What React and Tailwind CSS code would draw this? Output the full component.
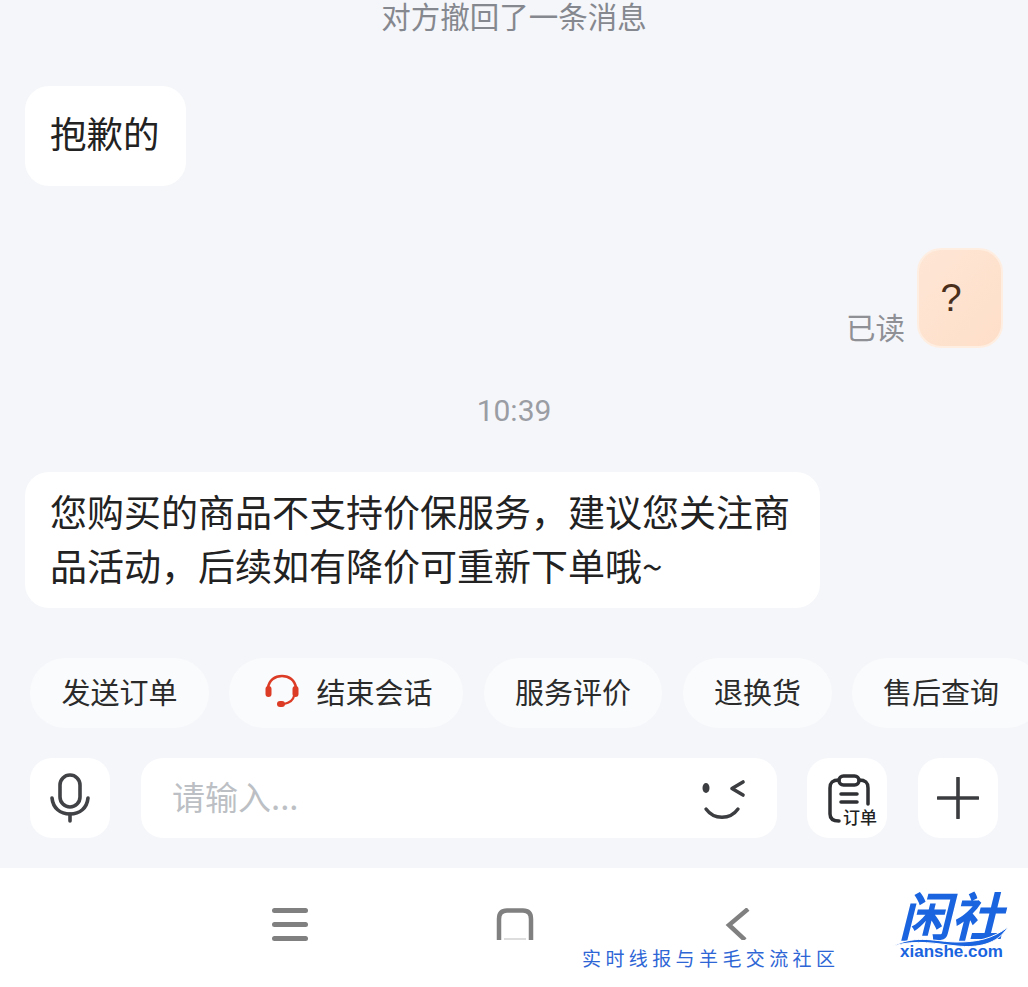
const Chip = ({ children, className = "" }) => (
  <div className={"h-[70px] shrink-0 rounded-[35px] bg-[#fafbfc] flex items-center justify-center pb-[4px] text-[29px] leading-none text-[#2b2b2b] " + className}>{children}</div>
);
export default function App() {
  return (
    <div className="relative w-[1028px] h-[987px] overflow-hidden bg-[#f5f6fa] flex flex-col font-['Noto_Sans_CJK_SC',sans-serif]">
      <div className="h-[34px] flex items-center justify-center pb-[4px] text-[29.5px] leading-[30px] text-[#85888e]">对方撤回了一条消息</div>

      <div className="mt-[52px] ml-[25px] w-[161px] h-[100px] rounded-[24px] bg-white flex items-center pl-[25px] pb-[5px] text-[36.5px] leading-none text-[#222]">抱歉的</div>

      <div className="mt-[62px] mr-[25px] flex justify-end items-end gap-[12px]">
        <span className="text-[29.5px] leading-none text-[#8e9095] pb-[7px]">已读</span>
        <div className="w-[86px] h-[100px] rounded-[24px] border-2 border-[#feeee2] bg-gradient-to-br from-[#fee6d5] to-[#fedfc9] flex items-center justify-center pr-[18px] text-[38px] leading-none text-[#4a2f1c] font-['Liberation_Sans',sans-serif]">?</div>
      </div>

      <div className="mt-[46px] h-[34px] flex items-center justify-center text-[30px] leading-none text-[#9a9da3] font-['Roboto',sans-serif]">10:39</div>

      <div className="mt-[44px] ml-[25px] w-[795px] h-[136px] rounded-[24px] bg-white pl-[25px] pr-[20px] pt-[12px] text-[37px] leading-[54px] text-[#222]">
        您购买的商品不支持价保服务，建议您关注商<br />品活动，后续如有降价可重新下单哦~
      </div>

      <div className="mt-[50px] ml-[30px] flex gap-[20px] overflow-hidden">
        <Chip className="w-[179px]">发送订单</Chip>
        <Chip className="w-[234px] gap-[17px] pl-[6px]">
          <svg width="34" height="34" viewBox="0 0 34 34" fill="none">
            <path d="M3 14 C4 6 10 2 17 2 C24 2 30 6 31 14" stroke="#dc3b26" strokeWidth="2.6" />
            <rect x="0.5" y="12" width="6" height="11" rx="3" fill="#dc3b26" />
            <rect x="27.5" y="12" width="6" height="11" rx="3" fill="#dc3b26" />
            <path d="M29 22 C28 27 24 29 19 30" stroke="#dc3b26" strokeWidth="2.2" />
            <rect x="12" y="27" width="8" height="6" rx="3" fill="#dc3b26" />
          </svg>
          <span>结束会话</span>
        </Chip>
        <Chip className="w-[178px] ml-[1px]">服务评价</Chip>
        <Chip className="w-[149px] ml-[1px]">退换货</Chip>
        <Chip className="w-[190px] justify-start pl-[31px]">售后查询</Chip>
      </div>

      <div className="mt-[30px] ml-[30px] flex">
        <div className="w-[80px] h-[80px] rounded-[22px] bg-white flex items-center justify-center">
          <svg width="40" height="50" viewBox="0 0 40 50" fill="none" stroke="#404245" strokeWidth="3.6" strokeLinecap="round">
            <rect x="10" y="2" width="20" height="32" rx="10" />
            <path d="M2 25 C3 35 10 41 20 41 C30 41 37 35 38 25" />
            <path d="M20 41 V48" />
          </svg>
        </div>
        <div className="ml-[31px] w-[636px] h-[80px] rounded-[22px] bg-white flex items-center justify-between pl-[31px] pr-[30px]">
          <span className="text-[33px] leading-none pb-[4px] text-[#bcbfc4]">请输入...</span>
          <svg width="46" height="50" viewBox="0 0 46 50" fill="none" stroke="#3b3d40" strokeLinecap="round">
            <ellipse cx="5" cy="15" rx="3.5" ry="5" fill="#3b3d40" stroke="none" />
            <path d="M42 9 L31 15.5 L42 22" strokeWidth="3.6" strokeLinejoin="round" />
            <path d="M5 36 C13 47 29 47 37 36" strokeWidth="3.4" />
          </svg>
        </div>
        <div className="ml-[30px] relative w-[80px] h-[80px] rounded-[22px] bg-white">
          <svg className="absolute left-[20px] top-[16px]" width="46" height="50" viewBox="0 0 46 50" fill="none" stroke="#2e3033" strokeWidth="3.5" strokeLinecap="round">
            <path d="M12 47 C5 47 3 44 3 40 V14 C3 9 5 6 12 6 M32 6 C39 6 41 9 41 14 V30" />
            <rect x="12" y="2" width="20" height="9" rx="4.5" />
            <path d="M14 20 H30 M14 28 H30" />
          </svg>
          <span className="absolute left-[36px] top-[50px] text-[17px] leading-none font-medium text-[#222] bg-white">订单</span>
        </div>
        <div className="ml-[31px] w-[80px] h-[80px] rounded-[22px] bg-white flex items-center justify-center">
          <svg width="42" height="42" viewBox="0 0 42 42" stroke="#3a3c3f" strokeWidth="3.6" strokeLinecap="round">
            <path d="M21 1 V41 M1 21 H41" />
          </svg>
        </div>
      </div>

      <div className="mt-[30px] flex-1 bg-white flex items-start pt-[40px] pl-[272px]">
        <div className="w-[36px] h-[33px] flex flex-col justify-between">
          <div className="h-[5px] rounded-full bg-[#808080]" />
          <div className="h-[5px] rounded-full bg-[#808080]" />
          <div className="h-[5px] rounded-full bg-[#808080]" />
        </div>
        <svg className="ml-[188px]" width="38" height="32" viewBox="0 0 38 32" fill="none" stroke="#808080" strokeWidth="4.5">
          <path d="M8 31 H30" stroke="#dddddd" strokeWidth="2" />
          <path d="M3 32 V11 C3 5 6 2.5 11 2.5 H27 C32 2.5 35 5 35 11 V32" />
        </svg>
        <svg className="ml-[191px]" width="26" height="32" viewBox="0 0 26 32" fill="none" stroke="#808080" strokeWidth="4.5">
          <path d="M23 1 L4 17 L20 32" />
        </svg>
      </div>

      <div className="absolute left-[582px] top-[946px] text-[19px] leading-[24px] tracking-[4.4px] text-[#2f66d6] whitespace-nowrap">实时线报与羊毛交流社区</div>

      <div className="absolute left-[892px] top-[890px] w-[120px] h-[72px]">
        <div className="absolute left-[7px] top-[-1px] h-[50px] text-[52px] leading-[50px] font-bold italic text-[#1a64e0] whitespace-nowrap">闲社</div>
        <svg className="absolute left-0 top-[36px]" width="120" height="24" viewBox="0 0 120 24" fill="none">
          <path d="M1 20 C25 8 45 16 65 16 C85 16 100 13 116 1 C105 19 85 22 65 20 C45 18 25 13 1 20 Z" fill="#1a64e0" stroke="#fff" strokeWidth="1" />
        </svg>
        <div className="absolute left-[8px] top-[53px] text-[17px] leading-[18px] font-semibold text-[#1a64e0] font-['Liberation_Sans',sans-serif]">xianshe.com</div>
      </div>
    </div>
  );
}
